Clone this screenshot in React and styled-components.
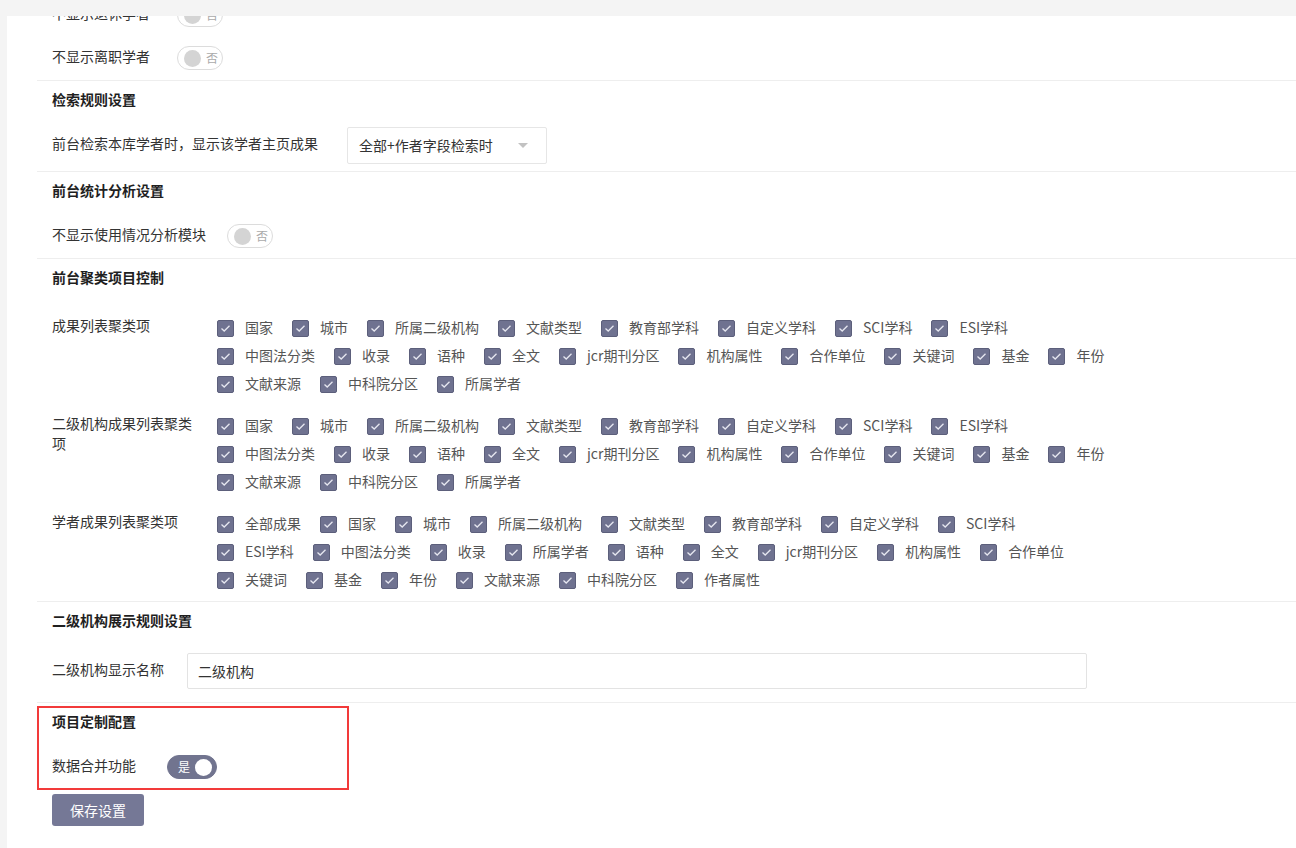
import React, { useLayoutEffect, useRef } from 'react';
import styled, { createGlobalStyle } from 'styled-components';

const GlobalStyle = createGlobalStyle`
  html, body { margin: 0; padding: 0; background: #f4f4f4; }
  body {
    font-family: "Noto Sans CJK SC", "Noto Sans", sans-serif;
    font-size: 14px;
    color: #333;
  }
  * { box-sizing: border-box; }
`;

const Page = styled.div`
  height: 100vh;
  padding: 16px 0 0 7px;
  display: flex;
  flex-direction: column;
`;

const Panel = styled.div`
  position: relative;
  flex: 1;
  min-height: 0;
  background: #fff;
  overflow: hidden;
`;

const Content = styled.div`
  padding: 10px 0 80px 30px;
`;

const Section = styled.section`
  position: relative;
  border-top: 1px solid #eeeeee;
  padding: 0 15px ${(p) => p.$pb || 0}px;
`;

const Title = styled.div`
  height: 40px;
  line-height: 36px;
  font-weight: bold;
  color: #1f1f1f;
`;

const FieldRow = styled.div`
  display: flex;
  align-items: center;
  height: ${(p) => p.$h || 38}px;
  margin-top: ${(p) => p.$mt || 5}px;
`;

const FieldLabel = styled.span`
  margin-right: ${(p) => p.$gap}px;
  margin-bottom: 4px;
  line-height: 20px;
  white-space: nowrap;
  color: #333;
`;

const Switch = styled.span`
  display: inline-flex;
  align-items: center;
  flex-direction: ${(p) => (p.$on ? 'row-reverse' : 'row')};
  justify-content: flex-end;
  gap: 5px;
  width: ${(p) => (p.$on ? 50 : 46)}px;
  height: 24px;
  border-radius: 12px;
  border: 1px solid ${(p) => (p.$on ? '#71748f' : '#dcdcdc')};
  background: ${(p) => (p.$on ? '#71748f' : '#fff')};
  padding: ${(p) => (p.$on ? '0 4px 0 10px' : '0 4px')};
  flex-shrink: 0;
`;

const Knob = styled.span`
  width: 17px;
  height: 17px;
  border-radius: 50%;
  background: ${(p) => (p.$on ? '#fff' : '#d4d4d4')};
  flex-shrink: 0;
`;

const SwitchText = styled.span`
  font-size: 12px;
  line-height: 14px;
  color: ${(p) => (p.$on ? '#fff' : '#aaa')};
  ${(p) => (p.$on ? 'margin-right: auto;' : '')}
`;

const Select = styled.div`
  width: 200px;
  height: 37px;
  border: 1px solid #e6e6e6;
  border-radius: 2px;
  padding: 0 11px;
  display: flex;
  align-items: center;
  justify-content: space-between;
  color: #333;
`;

const Caret = styled.span`
  width: 0;
  height: 0;
  border-left: 5px solid transparent;
  border-right: 5px solid transparent;
  border-top: 5px solid #c2c2c2;
  margin-right: 7px;
`;

const Groups = styled.div`
  display: flex;
  flex-direction: column;
  gap: 14px;
  margin-top: 15px;
`;

const Group = styled.div`
  display: flex;
  align-items: flex-start;
`;

const GroupLabel = styled.div`
  width: 140px;
  margin-right: 25px;
  line-height: 20px;
  padding-top: 1px;
  color: #333;
  flex-shrink: 0;
`;

const Options = styled.div`
  display: flex;
  flex-wrap: wrap;
  column-gap: 19px;
  width: 888px;
`;

const Option = styled.label`
  display: flex;
  align-items: center;
  gap: 11px;
  height: 28px;
  color: #555;
  white-space: nowrap;
`;

const OptionText = styled.span`
  line-height: 20px;
  margin-bottom: 2px;
`;

const Box = styled.span`
  width: 17px;
  height: 17px;
  border-radius: 2px;
  background: #6f7290;
  border: 1px solid #5c5f7b;
  display: flex;
  align-items: center;
  justify-content: center;
`;

const TextInput = styled.input`
  width: 900px;
  height: 36px;
  border: 1px solid #e3e3e3;
  border-radius: 2px;
  padding: 0 10px 1px;
  font: inherit;
  font-size: 14px;
  color: #333;
  outline: none;
`;

const Highlight = styled.div`
  position: absolute;
  left: 0;
  top: 3px;
  width: 312px;
  height: 84px;
  border: 2px solid #f23a3a;
  pointer-events: none;
`;

const SaveButton = styled.button`
  margin-top: 8px;
  width: 92px;
  height: 32px;
  border: none;
  border-radius: 3px;
  background: #757896;
  color: #fff;
  font: inherit;
  font-size: 14px;
  padding-bottom: 2px;
`;

const Toggle = ({ on }) => (
  <Switch $on={on}>
    <Knob $on={on} />
    <SwitchText $on={on}>{on ? '是' : '否'}</SwitchText>
  </Switch>
);

const Check = ({ label }) => (
  <Option>
    <Box>
      <svg width="11" height="9" viewBox="0 0 11 9">
        <path d="M1.5 4.5 L4.2 7 L9.5 1.8" fill="none" stroke="#e6e7f0" strokeWidth="1.3" />
      </svg>
    </Box>
    <OptionText>{label}</OptionText>
  </Option>
);

const groups = [
  {
    label: '成果列表聚类项',
    items: ['国家', '城市', '所属二级机构', '文献类型', '教育部学科', '自定义学科', 'SCI学科', 'ESI学科', '中图法分类', '收录', '语种', '全文', 'jcr期刊分区', '机构属性', '合作单位', '关键词', '基金', '年份', '文献来源', '中科院分区', '所属学者'],
  },
  {
    label: '二级机构成果列表聚类项',
    items: ['国家', '城市', '所属二级机构', '文献类型', '教育部学科', '自定义学科', 'SCI学科', 'ESI学科', '中图法分类', '收录', '语种', '全文', 'jcr期刊分区', '机构属性', '合作单位', '关键词', '基金', '年份', '文献来源', '中科院分区', '所属学者'],
  },
  {
    label: '学者成果列表聚类项',
    items: ['全部成果', '国家', '城市', '所属二级机构', '文献类型', '教育部学科', '自定义学科', 'SCI学科', 'ESI学科', '中图法分类', '收录', '所属学者', '语种', '全文', 'jcr期刊分区', '机构属性', '合作单位', '关键词', '基金', '年份', '文献来源', '中科院分区', '作者属性'],
  },
];

export default function App() {
  const panelRef = useRef(null);
  const anchorRef = useRef(null);

  useLayoutEffect(() => {
    if (panelRef.current && anchorRef.current) {
      panelRef.current.scrollTop = anchorRef.current.offsetTop - 64;
    }
  }, []);

  return (
    <>
      <GlobalStyle />
      <Page>
        <Panel ref={panelRef}>
          <Content>
            <Section $pb={3}>
              <Title>前台显示设置</Title>
              <FieldRow>
                <FieldLabel $gap={27}>不显示退休学者</FieldLabel>
                <Toggle on={false} />
              </FieldRow>
              <FieldRow>
                <FieldLabel $gap={27}>不显示离职学者</FieldLabel>
                <Toggle on={false} />
              </FieldRow>
            </Section>

            <Section $pb={7} ref={anchorRef}>
              <Title>检索规则设置</Title>
              <FieldRow>
                <FieldLabel $gap={29}>前台检索本库学者时，显示该学者主页成果</FieldLabel>
                <Select>
                  <span>全部+作者字段检索时</span>
                  <Caret />
                </Select>
              </FieldRow>
            </Section>

            <Section $pb={3}>
              <Title>前台统计分析设置</Title>
              <FieldRow>
                <FieldLabel $gap={21}>不显示使用情况分析模块</FieldLabel>
                <Toggle on={false} />
              </FieldRow>
            </Section>

            <Section $pb={7}>
              <Title>前台聚类项目控制</Title>
              <Groups>
                {groups.map((g) => (
                  <Group key={g.label}>
                    <GroupLabel>{g.label}</GroupLabel>
                    <Options>
                      {g.items.map((it, i) => (
                        <Check key={i} label={it} />
                      ))}
                    </Options>
                  </Group>
                ))}
              </Groups>
            </Section>

            <Section $pb={13}>
              <Title>二级机构展示规则设置</Title>
              <FieldRow $mt={11} $h={36}>
                <FieldLabel $gap={23}>二级机构显示名称</FieldLabel>
                <TextInput defaultValue="二级机构" />
              </FieldRow>
            </Section>

            <Section>
              <Title>项目定制配置</Title>
              <FieldRow>
                <FieldLabel $gap={31}>数据合并功能</FieldLabel>
                <Toggle on />
              </FieldRow>
              <SaveButton>保存设置</SaveButton>
              <Highlight />
            </Section>
          </Content>
        </Panel>
      </Page>
    </>
  );
}
